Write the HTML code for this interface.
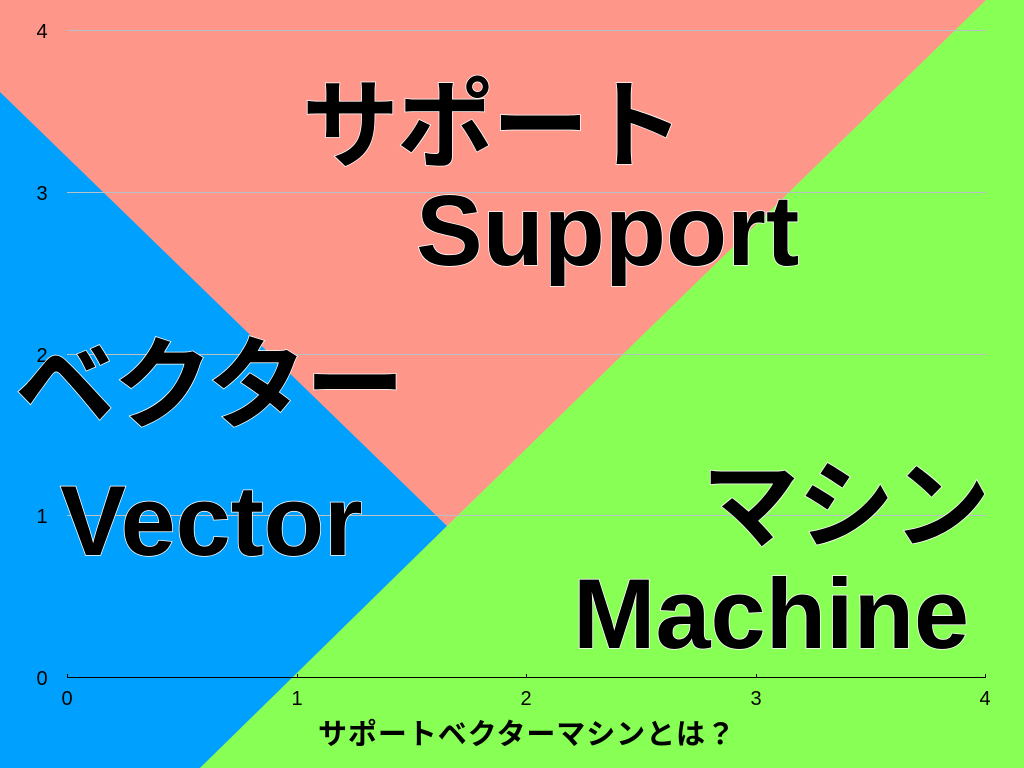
<!DOCTYPE html>
<html><head><meta charset="utf-8"><style>html,body{margin:0;padding:0;overflow:hidden}svg{display:block}</style></head><body>
<svg width="1024" height="768" xmlns="http://www.w3.org/2000/svg">
<rect width="1024" height="768" fill="#FF968A"/>
<polygon points="0,92 447,526 200,768 0,768" fill="#00A0FF"/>
<polygon points="986,0 1024,0 1024,768 200,768 447,526" fill="#88FF55"/>
<g stroke="#b8c0c8" stroke-width="1">
<line x1="67" y1="30.5" x2="986" y2="30.5"/>
<line x1="67" y1="192.5" x2="986" y2="192.5"/>
<line x1="67" y1="354.5" x2="986" y2="354.5"/>
<line x1="67" y1="515.5" x2="986" y2="515.5"/>
</g>
<line x1="67" y1="677.5" x2="986" y2="677.5" stroke="#000" stroke-width="1"/>
<g stroke="#000"><line x1="67.5" y1="674" x2="67.5" y2="678"/><line x1="297.5" y1="674" x2="297.5" y2="678"/><line x1="526.5" y1="674" x2="526.5" y2="678"/><line x1="756.5" y1="674" x2="756.5" y2="678"/><line x1="985.5" y1="674" x2="985.5" y2="678"/></g>
<g font-family="Liberation Sans, sans-serif" font-size="20" fill="#000" text-anchor="middle">
<text x="42" y="38">4</text><text x="42" y="200">3</text><text x="42" y="362">2</text><text x="42" y="523">1</text><text x="42" y="685">0</text>
<text x="67" y="705">0</text><text x="297" y="705">1</text><text x="526" y="705">2</text><text x="756" y="705">3</text><text x="985" y="705">4</text>
</g>
<g fill="#000" stroke="#fff" stroke-width="1.5" paint-order="stroke" font-weight="bold">
<text x="302" y="160" font-size="97" font-family="Liberation Sans, Noto Sans CJK JP, sans-serif" textLength="382">サポート</text>
<text x="416" y="265" font-size="100" font-family="Liberation Sans, sans-serif">Support</text>
<text x="15" y="420" font-size="100" font-family="Liberation Sans, Noto Sans CJK JP, sans-serif" textLength="390">ベクター</text>
<text x="60" y="555" font-size="99" font-family="Liberation Sans, sans-serif">Vector</text>
<text x="702" y="540" font-size="97" font-family="Liberation Sans, Noto Sans CJK JP, sans-serif" textLength="288">マシン</text>
<text x="573" y="648" font-size="99" font-family="Liberation Sans, sans-serif">Machine</text>
</g>
<text x="318" y="744" font-size="29" font-weight="bold" font-family="Liberation Sans, Noto Sans CJK JP, sans-serif" fill="#000" textLength="417">サポートベクターマシンとは？</text>
</svg>
</body></html>
